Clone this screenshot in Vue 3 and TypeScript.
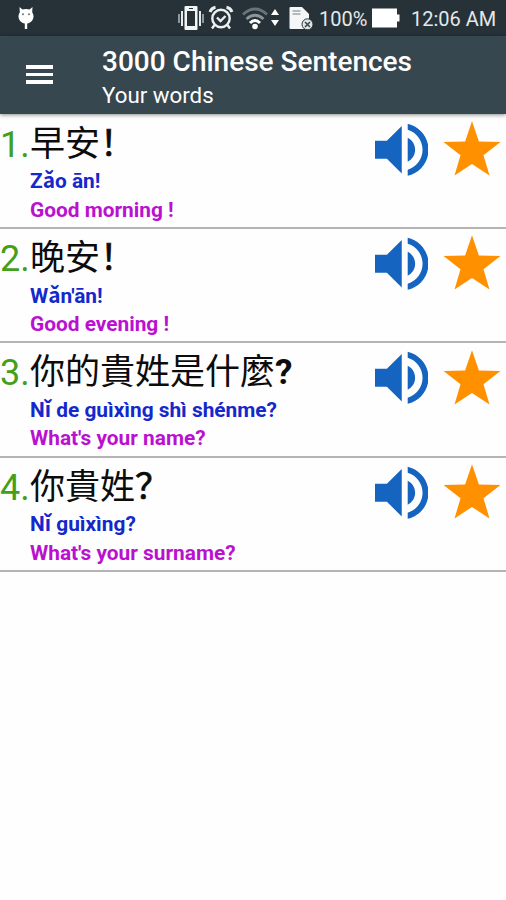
<script setup lang="ts">
interface Sentence {
  id: number
  hanzi: string
  ending: string
  boldEnding?: boolean
  pinyin: string
  english: string
}

const sentences: Sentence[] = [
  { id: 1, hanzi: '早安', ending: '！', pinyin: 'Zǎo ān!', english: 'Good morning !' },
  { id: 2, hanzi: '晚安', ending: '！', pinyin: "Wǎn'ān!", english: 'Good evening !' },
  { id: 3, hanzi: '你的貴姓是什麼', ending: '?', boldEnding: true, pinyin: 'Nǐ de guìxìng shì shénme?', english: "What's your name?" },
  { id: 4, hanzi: '你貴姓', ending: '？', pinyin: 'Nǐ guìxìng?', english: "What's your surname?" },
]
</script>

<template>
  <main class="screen">
    <div class="status">
      <svg class="bot" viewBox="0 0 18 24" width="18" height="24" fill="#fff">
        <path d="M2.500 1l3 2.600A8 8 0 0 1 9 3a8 8 0 0 1 3.500.6L15.500 1l-.3 5.200a7 7 0 0 1 1.300 4.100c0 4-3 6.700-6.300 7.200V23H7.800v-5.500c-3.300-.5-6.300-3.200-6.300-7.200a7 7 0 0 1 1.300-4.100z" />
        <circle cx="6" cy="8.200" r="1" fill="#667178" /><circle cx="12" cy="8.200" r="1" fill="#667178" />
      </svg>
      <span class="spacer"></span>
      <svg class="vibrate" viewBox="0 0 28 26" width="28" height="26">
        <path d="M8.500 1h11q1 0 1 1v22q0 1-1 1h-11q-1 0-1-1V2q0-1 1-1z" fill="#f2f5f6" />
        <path d="M10 6h8v15h-8z" fill="#263238" />
        <path d="M12 3.500h4" stroke="#263238" stroke-width="1" />
        <path d="M5 6v15M23 6v15" stroke="#e8ebec" stroke-width="2" />
        <path d="M2 9v9M26 9v9" stroke="#b3b9bc" stroke-width="1.500" />
      </svg>
      <svg class="alarm" viewBox="0 0 26 26" width="26" height="26" fill="none" stroke="#edf0f1" stroke-width="2.400">
        <circle cx="13" cy="13.500" r="8.700" />
        <path d="M2 7Q3.500 3 7.500 2.300M24 7Q22.500 3 18.500 2.300" stroke-width="3" />
        <path d="M6.500 20L4 23.500M19.500 20l2.500 3.500M9 12.500l3.500 3.500 5-5" />
      </svg>
      <svg class="wifi" viewBox="0 0 38 26" width="38" height="26" fill="none">
        <path d="M1 9.500Q13-1.500 25 9.500" stroke="#69747a" stroke-width="2.700" />
        <path d="M4.500 14Q13 6.500 21.500 14" stroke="#8c9599" stroke-width="2.700" />
        <path d="M8 18Q13 13 18 18" stroke="#fff" stroke-width="3" />
        <circle cx="13" cy="21.500" r="2.800" fill="#fff" />
        <path d="M29 10l4-6 4 6zM29 15h8l-4 6z" fill="#fff" />
      </svg>
      <svg class="sim" viewBox="0 0 26 26" width="26" height="26">
        <path d="M.5 3q0-1 1-1h11.500l7 7v15H1.500q-1 0-1-1z" fill="#f4f6f7" />
        <path d="M3.500 6h8M3.500 9h8" stroke="#b4bbbe" stroke-width="2" />
        <circle cx="18.500" cy="19.300" r="5.500" fill="#e0e4e5" stroke="#263238" stroke-width="1" />
        <path d="M16 17l5 5m0-5l-5 5" stroke="#36454c" stroke-width="1.500" />
      </svg>
      <span class="percent">100%</span>
      <svg class="battery" viewBox="0 0 28 20" width="28" height="20" fill="#fff">
        <path d="M0 .5h25v6h2.500v7H25v6H0z" />
      </svg>
      <span class="clock">12:06 AM</span>
    </div>

    <header class="toolbar">
      <button class="menu" aria-label="Menu"><i></i><i></i><i></i></button>
      <div class="heading">
        <h1>3000 Chinese Sentences</h1>
        <p>Your words</p>
      </div>
    </header>

    <ul class="list">
      <li v-for="s in sentences" :key="s.id" class="row">
        <span class="number">{{ s.id }}.</span>
        <div class="texts">
          <div class="hanzi">{{ s.hanzi }}<span class="ending" :class="{ strong: s.boldEnding }">{{ s.ending }}</span></div>
          <div class="pinyin">{{ s.pinyin }}</div>
          <div class="english">{{ s.english }}</div>
        </div>
        <svg class="speaker" viewBox="3 3 18 18" width="53.500" height="53.500" fill="#1565c0">
          <path d="M3 9v6h4l5 5V4L7 9H3zm13.500 3c0-1.770-1.020-3.290-2.500-4.030v8.050c1.480-.73 2.500-2.250 2.500-4.020zM14 3.230v2.060c2.890.86 5 3.540 5 6.710s-2.110 5.850-5 6.710v2.060c4.010-.91 7-4.490 7-8.770s-2.990-7.860-7-8.770z" />
        </svg>
        <svg class="star" viewBox="0 0 58 56" width="58" height="56" fill="#ff9100">
          <path d="M29 .3l6.900 20.200L57.500 21 40.500 34.300 46.500 54.500 29 43 11.500 54.500 17.500 34.300.5 21l21.600-.5z" />
        </svg>
      </li>
    </ul>
  </main>
</template>

<style>
body {
  margin: 0;
  background: #fff;
}
</style>

<style scoped>
.screen {
  width: 506px;
  height: 900px;
  overflow: hidden;
  background: #fefefe;
  font-family: Roboto, "Noto Sans CJK SC", sans-serif;
}
.status {
  display: flex;
  align-items: center;
  box-sizing: border-box;
  height: 36px;
  padding: 1px 11px 0 17px;
  background: #263238;
  color: #e4e8ea;
  font-size: 20px;
  white-space: nowrap;
}
.status svg { flex: none; }
.bot { margin-top: -1px; }
.spacer { flex: 1; }
.vibrate, .alarm, .wifi, .sim, .battery { margin-bottom: 1px; }
.alarm { margin-left: 3px; }
.wifi { margin-left: 8px; }
.sim { margin-left: 9px; }
.percent { width: 48px; margin-left: 4px; }
.battery { margin-left: 5px; }
.clock { width: 84px; margin-left: 11px; }
.toolbar {
  position: relative;
  display: flex;
  box-sizing: border-box;
  height: 78px;
  background: #37474f;
  color: #fff;
  box-shadow: 0 1px 4px rgba(0, 0, 0, 0.45);
}
.menu {
  display: flex;
  flex-direction: column;
  gap: 4px;
  width: 27px;
  margin: 29px 49px 0 26px;
  padding: 0;
  border: 0;
  background: none;
}
.menu i {
  width: 27px;
  height: 3.500px;
  background: #fff;
}
.heading { padding-top: 8px; white-space: nowrap; }
h1 {
  margin: 0;
  font-size: 28px;
  line-height: 36px;
  font-weight: 500;
}
p {
  margin: 0;
  font-size: 22.300px;
  line-height: 30px;
}
.list {
  margin: 0;
  padding: 0.700px 0 0;
  list-style: none;
}
.row {
  display: flex;
  align-items: flex-start;
  box-sizing: border-box;
  height: 114.300px;
  border-bottom: 2px solid #b4b4b4;
}
.number {
  width: 30px;
  color: #43a01a;
  font-size: 36px;
  line-height: 60px;
  white-space: nowrap;
}
.texts {
  flex: 1;
  white-space: nowrap;
}
.hanzi {
  height: 52.700px;
  color: #0c0c0c;
  font-family: "Noto Sans CJK SC", sans-serif;
  font-size: 35px;
  line-height: 52px;
}
.ending { -webkit-text-stroke: 0.700px #0c0c0c; }
.strong {
  font-family: Roboto, sans-serif;
  font-weight: 700;
  -webkit-text-stroke: 0;
}
.pinyin, .english {
  height: 28.500px;
  font-size: 20.850px;
  line-height: 28.500px;
  font-weight: 700;
}
.pinyin { color: #1428cc; }
.english { color: #ba10d0; }
.speaker { flex: none; margin: 8.100px 14.700px 0 0; }
.star { flex: none; margin: 6.500px 5px 0 0; }
</style>
